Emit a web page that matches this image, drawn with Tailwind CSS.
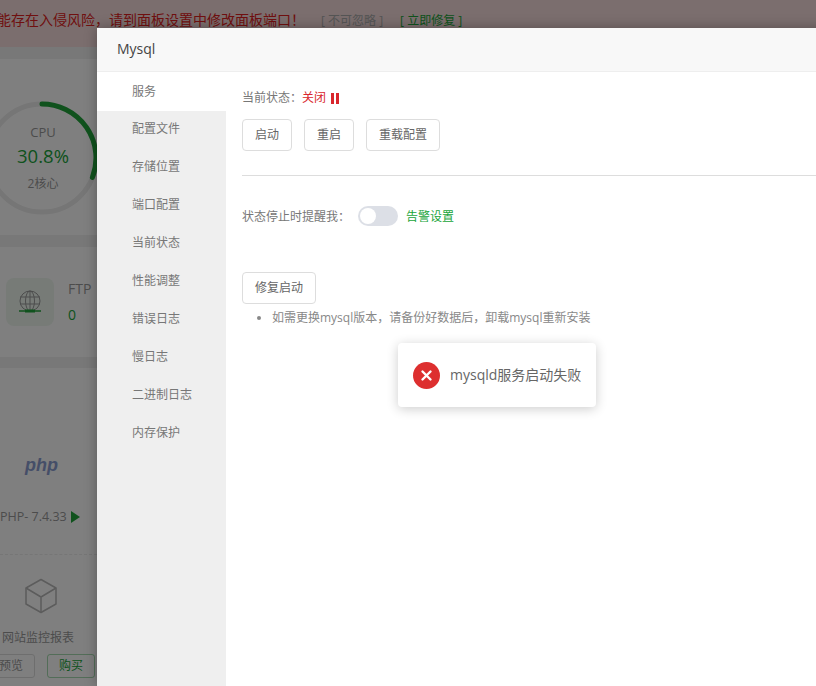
<!DOCTYPE html>
<html lang="zh">
<head>
  <meta charset="UTF-8" />
  <title>Mysql</title>
  <script src="https://cdn.jsdelivr.net/npm/@tailwindcss/browser@4"></script>
</head>
<body class="bg-[#f1f1f1] font-['Open_Sans','Noto_Sans_CJK_SC',sans-serif] text-[#555] overflow-hidden">
  <div class="relative w-[816px] h-[686px] overflow-hidden">
    <!-- warning banner -->
    <div class="h-[47px] bg-[#f6dddd] flex items-start pt-[11px] whitespace-nowrap overflow-hidden">
      <span class="ml-[-17px] text-sm leading-[18px] text-[#e02020]">可能存在入侵风险，请到面板设置中修改面板端口！</span>
      <span class="ml-[16px] text-xs leading-[18px] mt-[1px] text-[#aaa]">[ 不可忽略 ]</span>
      <span class="ml-[17px] text-xs leading-[18px] mt-[1px] text-[#20a53a]">[ 立即修复 ]</span>
    </div>
    <!-- panel behind the dialog -->
    <div class="w-[97px] h-[639px] flex flex-col overflow-hidden">
      <div class="h-[12px] shrink-0 bg-[#f1f1f1]"></div>
      <div class="h-[176px] shrink-0 bg-white relative">
        <svg class="absolute left-[-16px] top-[41px]" width="116" height="116" viewBox="0 0 116 116" fill="none">
          <circle cx="58" cy="58" r="54" stroke="#ececec" stroke-width="5" />
          <path d="M58 4 A 54 54 0 0 1 108.4 77.4" stroke="#20a53a" stroke-width="5" stroke-linecap="round" />
        </svg>
        <div class="absolute left-0 top-[65px] w-[86px] flex flex-col items-center">
          <span class="text-[13px] leading-[16px] text-[#999]">CPU</span>
          <span class="text-[18.5px] leading-[32px] text-[#20a53a]">30.8%</span>
          <span class="text-xs leading-[24px] text-[#999]">2核心</span>
        </div>
      </div>
      <div class="h-[12px] shrink-0 bg-[#f1f1f1]"></div>
      <div class="h-[110px] shrink-0 bg-white flex items-center pl-[6px] gap-[14px]">
        <div class="w-[48px] h-[48px] rounded-lg bg-[#eef7ef] flex items-center justify-center">
          <svg width="24" height="24" viewBox="0 0 24 24" fill="none" stroke="#999" stroke-width="1">
            <circle cx="12" cy="11" r="10" />
            <ellipse cx="12" cy="11" rx="4.5" ry="10" />
            <path d="M2 7h20M2 14h20M12 1v20" />
            <path d="M1 21h22" stroke="#20a53a" stroke-width="1.5" />
            <path d="M7 21h10" stroke="#20a53a" stroke-width="3" />
          </svg>
        </div>
        <div class="flex flex-col mt-[-1px]">
          <span class="text-sm leading-[26px] text-[#999]">FTP</span>
          <span class="text-sm leading-[25px] text-[#20a53a]">0</span>
        </div>
      </div>
      <div class="h-[11px] shrink-0 bg-[#f1f1f1]"></div>
      <div class="flex-1 bg-white relative">
        <span class="absolute left-[25px] top-[87px] font-['Liberation_Sans',sans-serif] font-bold italic text-[18px] leading-[20px] text-[#8b9dd0]">php</span>
        <div class="absolute left-0 top-[141px] flex items-center gap-[4px] whitespace-nowrap">
          <span class="text-[12.5px] leading-[16px] text-[#999]">PHP- 7.4.33</span>
          <svg width="9" height="12" viewBox="0 0 9 12"><path d="M0 0l9 6-9 6z" fill="#20a53a" /></svg>
        </div>
        <div class="absolute left-0 right-0 top-[186px] border-t border-dashed border-[#ececec]"></div>
        <svg class="absolute left-[24px] top-[210px]" width="34" height="36" viewBox="0 0 34 36" fill="none" stroke="#b8b8b8" stroke-width="1.5" stroke-linejoin="round">
          <path d="M17 1.5 32 10v16l-15 8.5L2 26V10z" />
          <path d="M2 10l15 9 15-9M17 19v15.5" />
        </svg>
        <span class="absolute left-[2px] top-[262px] whitespace-nowrap text-xs leading-[16px] text-[#999]">网站监控报表</span>
        <div class="absolute left-[-13px] top-[286px] flex gap-[12px]">
          <span class="w-[48px] h-[24px] border border-[#ddd] rounded-[3px] text-xs leading-[22px] text-right pr-[11px] text-[#999]">预览</span>
          <span class="w-[48px] h-[24px] border border-[#20a53a]/40 rounded-[3px] text-xs leading-[22px] text-center text-[#20a53a]">购买</span>
        </div>
      </div>
    </div>
    <!-- shade over the panel -->
    <div class="absolute inset-0 bg-black/50"></div>

    <!-- dialog -->
    <div class="absolute left-[97px] top-[28px] w-[800px] h-[658px] bg-white flex flex-col shadow-[0_0_12px_rgba(0,0,0,0.3)]">
      <div class="h-[44px] shrink-0 bg-[#f8f8f8] border-b border-[#eee] pl-[20px] text-sm leading-[42px] text-[#444]">Mysql</div>
      <div class="flex flex-1">
        <ul class="w-[129px] shrink-0 bg-[#efefef] text-xs text-[#777]">
          <li class="h-[39px] bg-white pl-[35px] leading-[39px]">服务</li>
          <li class="h-[38px] pl-[35px] leading-[36px]">配置文件</li>
          <li class="h-[38px] pl-[35px] leading-[36px]">存储位置</li>
          <li class="h-[38px] pl-[35px] leading-[36px]">端口配置</li>
          <li class="h-[38px] pl-[35px] leading-[36px]">当前状态</li>
          <li class="h-[38px] pl-[35px] leading-[36px]">性能调整</li>
          <li class="h-[38px] pl-[35px] leading-[36px]">错误日志</li>
          <li class="h-[38px] pl-[35px] leading-[36px]">慢日志</li>
          <li class="h-[38px] pl-[35px] leading-[36px]">二进制日志</li>
          <li class="h-[38px] pl-[35px] leading-[36px]">内存保护</li>
        </ul>
        <div class="flex-1 pl-[16px] pt-[17px] text-xs text-[#777]">
          <div class="flex items-center h-[18px]">
            <span>当前状态：</span>
            <span class="text-[#d9262c]">关闭</span>
            <span class="ml-[5px] flex gap-[2px]">
              <i class="block w-[3px] h-[11px] bg-[#d9262c]"></i>
              <i class="block w-[3px] h-[11px] bg-[#d9262c]"></i>
            </span>
          </div>
          <div class="flex gap-[12px] mt-[12px]">
            <button class="h-[32px] px-[12px] bg-white border border-[#ddd] rounded-[4px] text-xs text-[#666]">启动</button>
            <button class="h-[32px] px-[12px] bg-white border border-[#ddd] rounded-[4px] text-xs text-[#666]">重启</button>
            <button class="h-[32px] px-[12px] bg-white border border-[#ddd] rounded-[4px] text-xs text-[#666]">重载配置</button>
          </div>
          <div class="border-t border-[#ddd] mt-[24px]"></div>
          <div class="flex items-center mt-[30px] h-[20px]">
            <span class="mt-[1px]">状态停止时提醒我：</span>
            <span class="ml-[8px] w-[40px] h-[20px] rounded-full bg-[#dcdfe6] p-[2px] block">
              <i class="block w-[16px] h-[16px] rounded-full bg-white"></i>
            </span>
            <span class="ml-[8px] mt-[1px] text-[#20a53a]">告警设置</span>
          </div>
          <button class="mt-[46px] h-[32px] px-[12px] bg-white border border-[#ddd] rounded-[4px] text-xs text-[#666] block">修复启动</button>
          <ul class="list-disc pl-[30px] mt-[3px] leading-[22px] text-[#888]">
            <li>如需更换mysql版本，请备份好数据后，卸载mysql重新安装</li>
          </ul>
        </div>
      </div>
    </div>

    <!-- message toast -->
    <div class="absolute left-[398px] top-[343px] w-[198px] h-[64px] bg-white rounded-[4px] shadow-[0_2px_12px_rgba(0,0,0,0.2)] flex items-center pl-[15px] gap-[10px]">
      <svg width="27" height="27" viewBox="0 0 27 27">
        <circle cx="13.5" cy="13.5" r="13.5" fill="#dd2f2f" />
        <path d="M9.5 9.5l8 8M17.5 9.5l-8 8" stroke="#fff" stroke-width="2.4" stroke-linecap="round" />
      </svg>
      <span class="text-sm text-[#666]">mysqld服务启动失败</span>
    </div>
  </div>
</body>
</html>
